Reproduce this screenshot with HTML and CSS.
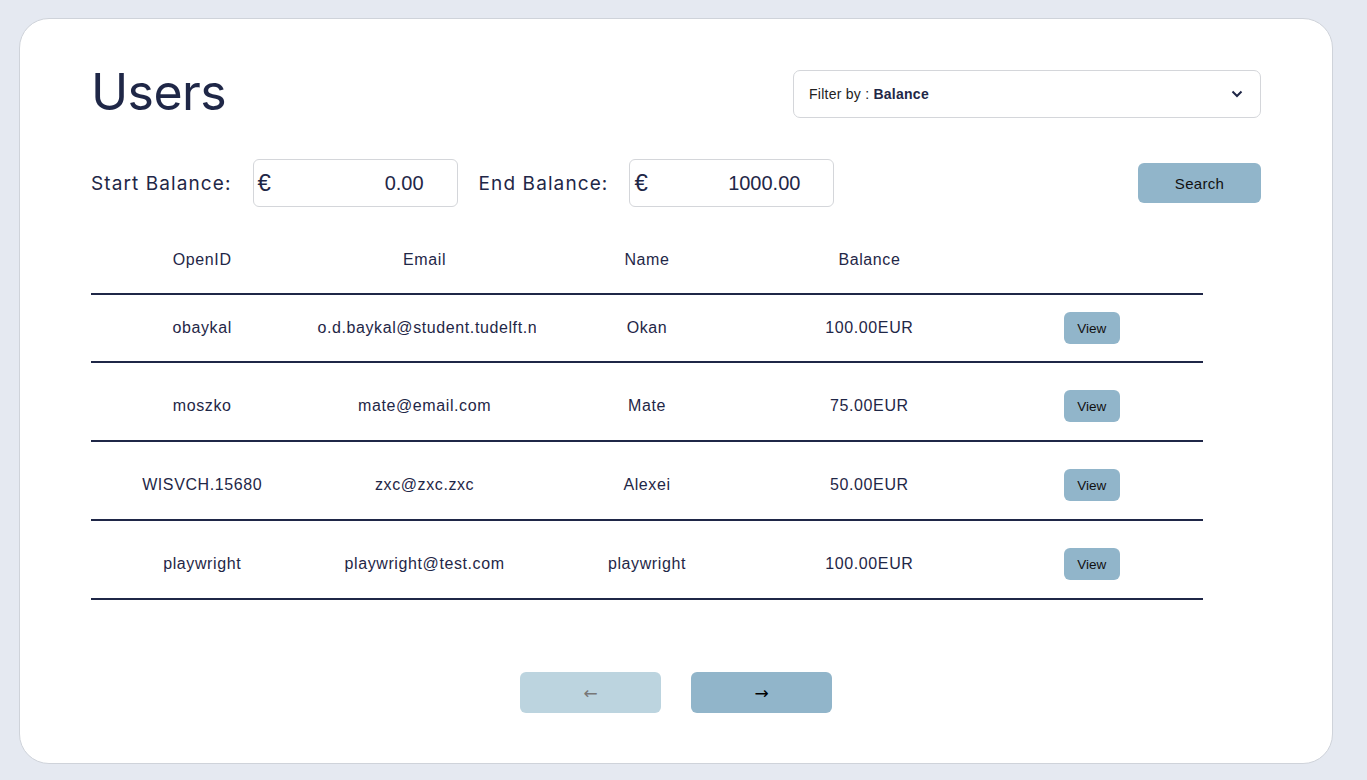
FILE: index.html
```html
<!DOCTYPE html>
<html lang="en">
<head>
<meta charset="utf-8">
<title>Users</title>
<link rel="stylesheet" href="styles.css">
</head>
<body>
<main class="card">
  <header class="top">
    <h1 class="title">Users</h1>
    <div class="filter">
      <span class="filter-text">Filter by : <b>Balance</b></span>
      <svg class="chev" width="12" height="8" viewBox="0 0 12 8"><path d="M1.5 1.5 L6 6 L10.5 1.5" fill="none" stroke="#1f2747" stroke-width="2"/></svg>
    </div>
  </header>

  <section class="range">
    <label class="range-label">Start Balance:</label>
    <div class="money"><span class="eur">€</span><span class="val">0.00</span></div>
    <label class="range-label">End Balance:</label>
    <div class="money"><span class="eur">€</span><span class="val">1000.00</span></div>
    <button class="search">Search</button>
  </section>

  <div class="table">
    <div class="row head">
      <div class="cell">OpenID</div>
      <div class="cell">Email</div>
      <div class="cell">Name</div>
      <div class="cell">Balance</div>
      <div class="cell"></div>
    </div>
    <div class="row first">
      <div class="cell">obaykal</div>
      <div class="cell">o.d.baykal@student.tudelft.nl</div>
      <div class="cell">Okan</div>
      <div class="cell">100.00EUR</div>
      <div class="cell"><button class="view">View</button></div>
    </div>
    <div class="row">
      <div class="cell">moszko</div>
      <div class="cell">mate@email.com</div>
      <div class="cell">Mate</div>
      <div class="cell">75.00EUR</div>
      <div class="cell"><button class="view">View</button></div>
    </div>
    <div class="row">
      <div class="cell">WISVCH.15680</div>
      <div class="cell">zxc@zxc.zxc</div>
      <div class="cell">Alexei</div>
      <div class="cell">50.00EUR</div>
      <div class="cell"><button class="view">View</button></div>
    </div>
    <div class="row">
      <div class="cell">playwright</div>
      <div class="cell">playwright@test.com</div>
      <div class="cell">playwright</div>
      <div class="cell">100.00EUR</div>
      <div class="cell"><button class="view">View</button></div>
    </div>
  </div>

  <nav class="pager">
    <button class="page prev" disabled>←</button>
    <button class="page next">→</button>
  </nav>
</main>
</body>
</html>
```

FILE: styles.css
```css
* { box-sizing: border-box; }
html, body { margin: 0; padding: 0; }
body {
  background: #e5e9f1;
  padding: 18px 34px 16px 19px;
  font-family: "Liberation Sans", Arial, sans-serif;
  color: #1f2747;
}
.card {
  background: #fff;
  border: 1px solid #cfd3da;
  border-radius: 30px;
  height: 746px;
  padding: 51px 71px 0 71px;
  display: flex;
  flex-direction: column;
}
.top {
  display: flex;
  justify-content: space-between;
  align-items: center;
  height: 48px;
}
.title {
  margin: 0 0 4px 0;
  font-family: Inter, "Liberation Sans", sans-serif;
  font-weight: 400;
  font-size: 50px;
  letter-spacing: -0.6px;
  color: #1f2747;
  line-height: 1;
}
.filter {
  width: 468px;
  height: 48px;
  border: 1px solid #d4d6da;
  border-radius: 7px;
  display: flex;
  align-items: center;
  justify-content: space-between;
  padding: 0 17px 0 15px;
}
.filter-text { font-size: 14px; letter-spacing: 0.25px; color: #222; }
.filter-text b { color: #1f2747; }
.range {
  margin-top: 41px;
  display: flex;
  align-items: center;
  height: 48px;
}
.range-label {
  font-family: Inter, "Liberation Sans", sans-serif;
  font-size: 19px;
  letter-spacing: 1.1px;
  margin-right: 21px;
  color: #1f2747;
}
.money {
  width: 205px;
  height: 48px;
  border: 1px solid #d4d6da;
  border-radius: 6px;
  display: flex;
  align-items: center;
  justify-content: space-between;
  padding: 0 33px 0 4px;
  margin-right: 21px;
}
.eur { font-size: 24px; color: #1f2747; }
.val { font-size: 20px; color: #1f2747; }
.search {
  margin-left: auto;
  width: 123px;
  height: 40px;
  border: none;
  border-radius: 6px;
  background: #91b5ca;
  font-family: "Liberation Sans", Arial, sans-serif;
  font-size: 15px;
  color: #111;
  letter-spacing: 0.3px;
}
.table {
  margin-top: 20px;
  width: 1112px;
}
.row {
  display: grid;
  grid-template-columns: repeat(5, 1fr);
  align-items: center;
  border-bottom: 2px solid #1f2747;
  height: 79px;
  padding-top: 9px;
}
.row.head { height: 68px; padding-top: 0; }
.row.first { height: 68px; padding-top: 0; }
.cell {
  text-align: center;
  font-size: 16px;
  letter-spacing: 0.6px;
  padding: 0 4px;
  white-space: nowrap;
  overflow: hidden;
}
.view {
  width: 56px;
  height: 32px;
  border: none;
  border-radius: 6px;
  background: #91b5ca;
  font-family: "Liberation Sans", Arial, sans-serif;
  font-size: 13.5px;
  color: #111;
  padding: 0;
}
.pager {
  margin-top: 72px;
  display: flex;
  justify-content: center;
  gap: 30px;
}
.page {
  width: 141px;
  height: 41px;
  border: none;
  border-radius: 6px;
  font-size: 17px;
  font-family: "DejaVu Sans", sans-serif;
}
.prev { background: #bcd4df; color: #777; }
.next { background: #91b5ca; color: #000; }
```
